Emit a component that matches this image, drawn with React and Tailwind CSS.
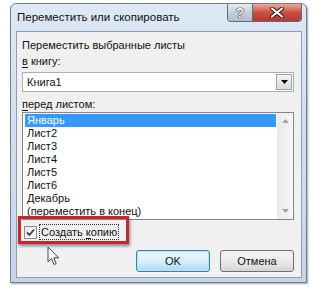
const sheets = ["Январь", "Лист2", "Лист3", "Лист4", "Лист5", "Лист6", "Декабрь", "(переместить в конец)"];

const Cursor = () => (
  <svg width="13" height="20" viewBox="0 0 13 20" className="absolute left-[47px] top-[246px]">
    <path
      d="M1 1 L1 16 L4.5 12.5 L7 18.5 L9.2 17.6 L6.8 11.8 L11.5 11.8 Z"
      fill="#fff"
      stroke="#444"
      strokeWidth="1"
      strokeLinejoin="round"
    />
  </svg>
);

const Arrow = ({ up, color = "#000" }) => (
  <svg width="7" height="4" viewBox="0 0 7 4">
    <path d={up ? "M0 4 L3.5 0 L7 4 Z" : "M0 0 L7 0 L3.5 4 Z"} fill={color} />
  </svg>
);

export default function App() {
  return (
    <div className="relative w-[317px] h-[287px] overflow-hidden bg-white font-['Liberation_Sans',Arial,sans-serif] text-[11px] text-[#111]">
      <div className="ml-[10px] mt-[3px] flex h-[280px] w-[297px] flex-col rounded-t-[6px] border border-[#6f8196] bg-gradient-to-b from-[#dde8f5] to-[#c6d5e7] shadow-[1px_1px_2px_rgba(0,0,0,0.35)]">
        {/* title bar */}
        <div className="flex h-[27px] items-start justify-between pr-[4px]">
          <div className="pl-[6px] pt-[5px] text-[11.5px] leading-[16px]">Переместить или скопировать</div>
          <div className="flex h-[18px] overflow-hidden rounded-b-[4px] border border-t-0 border-[#5d6b7c]">
            <div className="flex w-[25px] items-center justify-center border-r border-[#5d6b7c] bg-gradient-to-b from-[#e4ebf3] via-[#c3cfdc] to-[#b0bfd0] text-[14px] font-bold leading-none text-white [text-shadow:0_0_1px_#222,0_0_1px_#222,0_0_1px_#222]">
              ?
            </div>
            <div className="flex w-[48px] items-center justify-center bg-gradient-to-b from-[#e9a99c] via-[#cb4f42] to-[#b7372b]">
              <svg width="14" height="11" viewBox="0 0 14 11">
                <path d="M2 1.5 L12 9.5 M12 1.5 L2 9.5" stroke="#3b0f0a" strokeWidth="4" strokeLinecap="round" />
                <path d="M2 1.5 L12 9.5 M12 1.5 L2 9.5" stroke="#fff" strokeWidth="2.2" strokeLinecap="round" />
              </svg>
            </div>
          </div>
        </div>

        {/* content */}
        <div className="ml-[5px] mr-[4px] flex h-[247px] flex-col border border-[#8e9fb3] bg-[#f0f0f0] pl-[5px] pr-[7px] pt-[5px]">
          <div className="leading-[16px]">Переместить выбранные листы</div>
          <div className="leading-[16px]">
            <span className="underline underline-offset-2">в</span> книгу:
          </div>
          <div className="mt-[3px] flex h-[20px] items-center border border-[#a9afb8] bg-white pl-[4px]">
            <span className="flex-1 leading-[16px]">Книга1</span>
            <div className="mr-px flex h-[16px] w-[16px] items-center justify-center border border-[#9ea3a9] bg-gradient-to-b from-[#f4f4f4] to-[#dcdcdc]">
              <Arrow />
            </div>
          </div>
          <div className="mt-[4px] leading-[16px]">
            <span className="underline underline-offset-2">п</span>еред листом:
          </div>
          <div className="flex h-[108px] border border-[#828790] bg-white">
            <div className="flex-1 p-px pl-[2px]">
              {sheets.map((s, i) => (
                <div
                  key={s}
                  className={
                    i === 0
                      ? "h-[13px] bg-[#3399ff] pl-[2px] leading-[13px] text-white"
                      : "h-[13px] pl-[2px] leading-[13px]"
                  }
                >
                  {s}
                </div>
              ))}
            </div>
            <div className="flex w-[16px] flex-col items-center justify-between bg-gradient-to-r from-[#ebebeb] to-[#f5f5f5] py-[6px]">
              <Arrow up color="#a3a3a3" />
              <Arrow color="#a3a3a3" />
            </div>
          </div>
          <div className="mt-[4px] flex h-[16px] items-center pl-[2px]">
            <div className="flex h-[13px] w-[13px] items-center justify-center border border-[#8e8f8f] bg-gradient-to-br from-[#e6e6e6] to-white">
              <svg width="9" height="9" viewBox="0 0 9 9">
                <path d="M1 4.5 L3.5 7 L8 1.5" fill="none" stroke="#2a3f74" strokeWidth="1.8" />
              </svg>
            </div>
            <div className="ml-[2px] border border-dotted border-[#333] px-[1px] leading-[14px]">
              Создать <span className="underline underline-offset-2">к</span>опию
            </div>
          </div>
          <div className="mt-[10px] flex justify-end gap-[10px]">
            <button className="h-[22px] w-[74px] rounded-[3px] border border-[#3c7fb1] bg-gradient-to-b from-[#eaf6fd] via-[#d9f0fc] to-[#a7d9f5] shadow-[inset_0_0_0_1px_#b6e4fb]">
              OK
            </button>
            <button className="h-[22px] w-[74px] rounded-[3px] border border-[#707070] bg-gradient-to-b from-[#f2f2f2] via-[#ebebeb] to-[#d4d4d4]">
              Отмена
            </button>
          </div>
        </div>
      </div>

      {/* annotation */}
      <div className="absolute left-[18px] top-[216px] h-[28px] w-[111px] border-[3px] border-[#c8262c] shadow-[1px_2px_3px_rgba(0,0,0,0.45)]" />
      <Cursor />
    </div>
  );
}
